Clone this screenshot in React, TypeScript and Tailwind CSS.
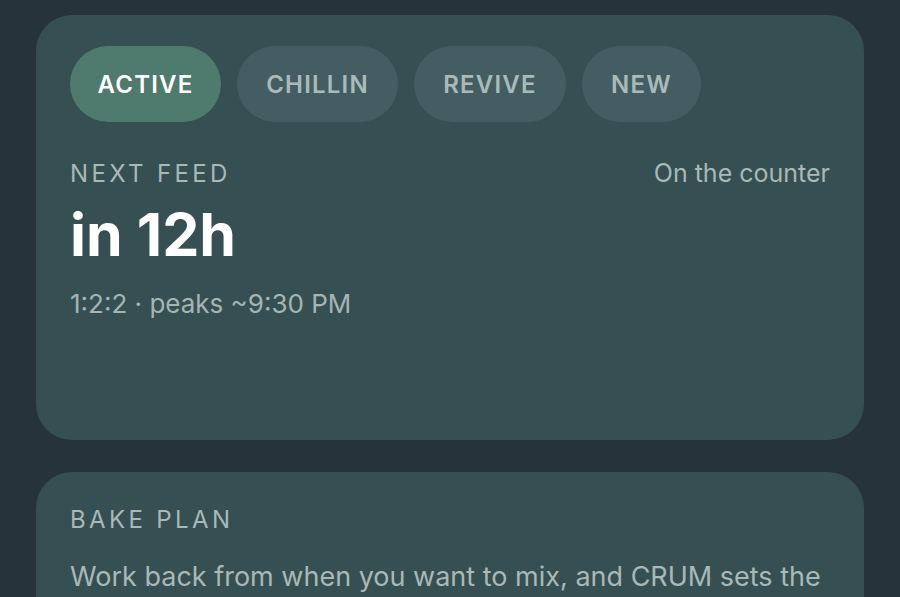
import React from 'react';

const tabs = [
  { label: 'ACTIVE', w: 'w-[151px]' },
  { label: 'CHILLIN', w: 'w-[161px]' },
  { label: 'REVIVE', w: 'w-[152px]' },
  { label: 'NEW', w: 'w-[119px]' },
];

export default function App() {
  return (
    <div className="h-[597px] w-[900px] overflow-hidden bg-[#27333a] px-[36px] pt-[15px] font-['Inter',sans-serif] antialiased">
      {/* Starter status card */}
      <div className="h-[425px] rounded-[36px] bg-[#364f52] px-[34px] pt-[31px]">
        <div className="flex gap-[16px]">
          {tabs.map((t, i) => (
            <button
              key={t.label}
              className={`${t.w} h-[76px] rounded-full pt-[2px] text-[24px] font-semibold tracking-[0.05em] ${
                i === 0 ? 'bg-[#4f7a6e] text-white' : 'bg-[#445d62] text-[#a9bbb9]'
              }`}
            >
              {t.label}
            </button>
          ))}
        </div>
        <div className="mt-[33px] flex items-center justify-between">
          <span className="text-[24px] tracking-[0.14em] text-[#a8b9b7]">NEXT FEED</span>
          <span className="text-[25px] text-[#a8b9b7]">On the counter</span>
        </div>
        <div className="mt-[12px] text-[59px] font-bold leading-none text-white">in 12h</div>
        <div className="mt-[20px] text-[26px] text-[#a5b5b3]">1:2:2 · peaks ~9:30 PM</div>
      </div>

      {/* Bake plan card */}
      <div className="mt-[32px] h-[200px] rounded-[36px] bg-[#364f52] px-[34px] pt-[30px]">
        <div className="text-[24px] tracking-[0.14em] text-[#a8b9b7]">BAKE PLAN</div>
        <p className="mt-[20px] text-[27px] leading-[1.4] text-[#a8b9b7]">
          Work back from when you want to mix, and CRUM sets the feeding schedule for you.
        </p>
      </div>
    </div>
  );
}
